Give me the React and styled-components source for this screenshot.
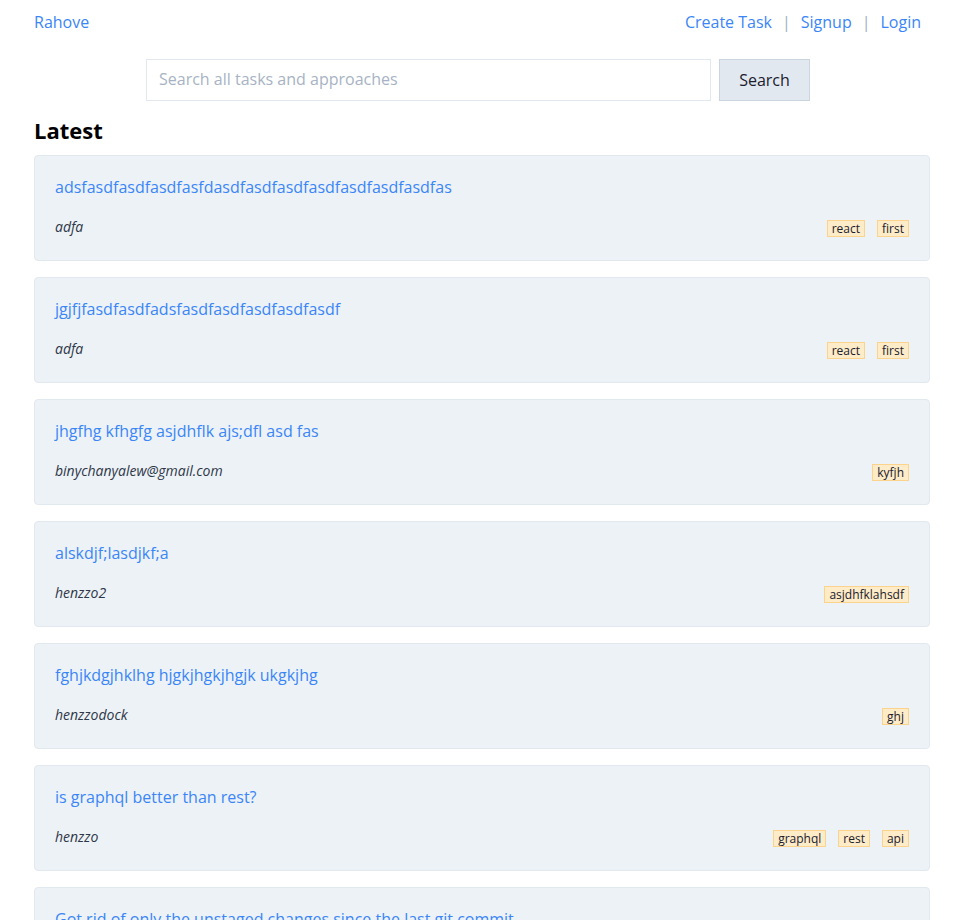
import React from 'react'
import styled, { createGlobalStyle } from 'styled-components'

const GlobalStyle = createGlobalStyle`
  body {
    margin: 0;
    background: #fff;
    font-family: "Open Sans", "Noto Sans", sans-serif;
    color: #1a202c;
  }
`

const Page = styled.div`
  padding: 0 23px 0 34px;
`

const Header = styled.header`
  display: flex;
  justify-content: space-between;
  align-items: center;
  height: 44px;
  padding-right: 9px;
`

const Brand = styled.a`
  color: #3b86f7;
  font-size: 16px;
  text-decoration: none;
`

const Nav = styled.nav`
  display: flex;
  align-items: center;
  gap: 10px;
  font-size: 16px;
`

const NavLink = styled.a`
  color: #3b86f7;
  text-decoration: none;
`

const Sep = styled.span`
  color: #a0aec0;
`

const SearchForm = styled.form`
  display: flex;
  justify-content: center;
  gap: 8px;
  margin-top: 15px;
  padding-right: 8px;
`

const SearchInput = styled.input`
  box-sizing: border-box;
  width: 565px;
  height: 42px;
  border: 1px solid #e2e8f0;
  padding: 0 12px 2px;
  font: inherit;
  font-size: 16px;
  outline: none;
  &::placeholder {
    color: #a7b3c4;
  }
`

const SearchButton = styled.button`
  box-sizing: border-box;
  width: 91px;
  height: 42px;
  background: #e2e8f0;
  border: 1px solid #cbd5e0;
  padding-bottom: 2px;
  font: inherit;
  font-size: 16px;
  color: #1a202c;
`

const Heading = styled.h2`
  margin: 14px 0 10px;
  font-size: 22px;
  font-weight: 700;
  color: #000;
`

const List = styled.div`
  display: flex;
  flex-direction: column;
  gap: 16px;
`

const Card = styled.div`
  background: #edf2f7;
  border: 1px solid #e2e8f0;
  border-radius: 4px;
  padding: 19px 20px 23px;
`

const Title = styled.a`
  display: block;
  color: #3b86f7;
  font-size: 16px;
  line-height: 24px;
  text-decoration: none;
`

const Footer = styled.div`
  display: flex;
  justify-content: space-between;
  align-items: center;
  height: 22px;
  margin-top: 16px;
`

const Author = styled.span`
  font-style: italic;
  font-size: 14px;
  color: #2d3748;
`

const Tags = styled.div`
  display: flex;
  gap: 12px;
  margin-top: 4px;
`

const Tag = styled.span`
  background: #feebc8;
  border: 1px solid #fbd38d;
  font-size: 12px;
  line-height: 15px;
  padding: 0 4px;
  color: #1a202c;
`

const tasks = [
  { title: 'adsfasdfasdfasdfasfdasdfasdfasdfasdfasdfasdfasdfas', author: 'adfa', tags: ['react', 'first'] },
  { title: 'jgjfjfasdfasdfadsfasdfasdfasdfasdfasdf', author: 'adfa', tags: ['react', 'first'] },
  { title: 'jhgfhg kfhgfg asjdhflk ajs;dfl asd fas', author: 'binychanyalew@gmail.com', tags: ['kyfjh'] },
  { title: 'alskdjf;lasdjkf;a', author: 'henzzo2', tags: ['asjdhfklahsdf'] },
  { title: 'fghjkdgjhklhg hjgkjhgkjhgjk ukgkjhg', author: 'henzzodock', tags: ['ghj'] },
  { title: 'is graphql better than rest?', author: 'henzzo', tags: ['graphql', 'rest', 'api'] },
  { title: 'Got rid of only the unstaged changes since the last git commit', author: 'henzzo', tags: ['git'] },
]

export default function App() {
  return (
    <Page>
      <GlobalStyle />
      <Header>
        <Brand href="#">Rahove</Brand>
        <Nav>
          <NavLink href="#">Create Task</NavLink>
          <Sep>|</Sep>
          <NavLink href="#">Signup</NavLink>
          <Sep>|</Sep>
          <NavLink href="#">Login</NavLink>
        </Nav>
      </Header>
      <SearchForm onSubmit={e => e.preventDefault()}>
        <SearchInput placeholder="Search all tasks and approaches" />
        <SearchButton type="submit">Search</SearchButton>
      </SearchForm>
      <Heading>Latest</Heading>
      <List>
        {tasks.map((task, index) => (
          <Card key={index}>
            <Title href="#">{task.title}</Title>
            <Footer>
              <Author>{task.author}</Author>
              <Tags>
                {task.tags.map(tag => <Tag key={tag}>{tag}</Tag>)}
              </Tags>
            </Footer>
          </Card>
        ))}
      </List>
    </Page>
  )
}
